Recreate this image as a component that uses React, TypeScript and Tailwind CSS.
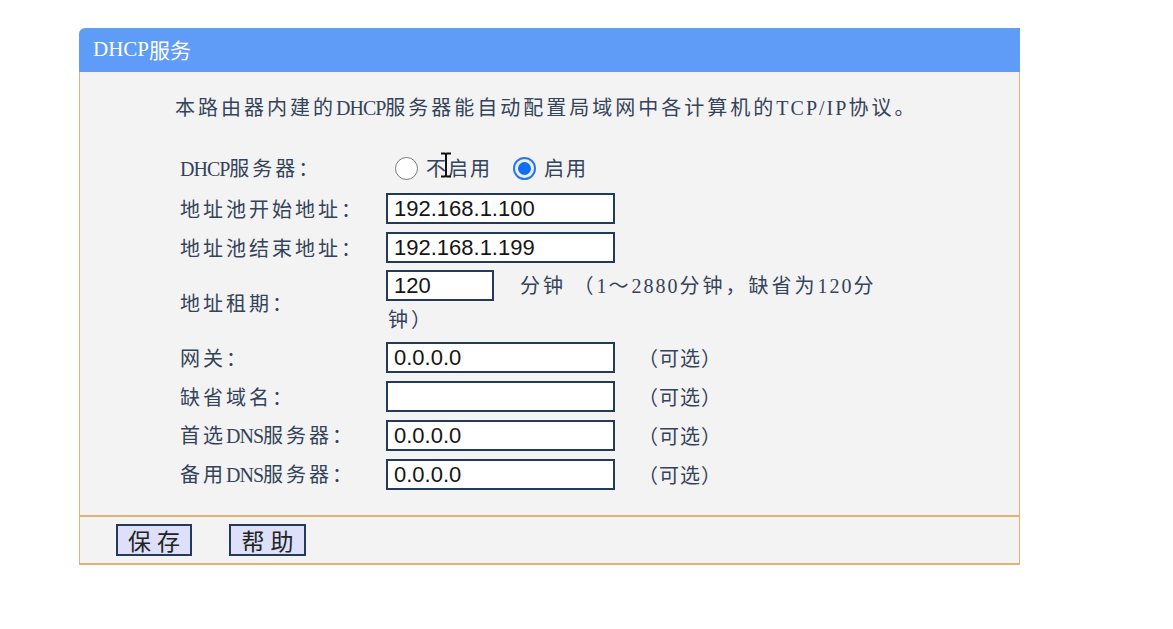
import type { ReactNode } from "react";

const cjk = { fontFamily: '"Noto Sans CJK SC", "Liberation Sans", sans-serif' };
const serif = '"Liberation Serif", "Noto Sans CJK SC", serif';

function L({ children, t = 2 }: { children: ReactNode; t?: number }) {
  return <span style={{ fontFamily: serif, letterSpacing: `${t}px` }}>{children}</span>;
}

function Row({ label, h, children }: { label: ReactNode; h: string; children: ReactNode }) {
  return (
    <div className={`flex items-center ${h}`}>
      <div className="w-[206px] shrink-0 text-[20px] tracking-[3px] text-[#34435a]" style={cjk}>
        {label}
      </div>
      <div className="flex-1">{children}</div>
    </div>
  );
}

function Field({ value, w = "w-[229px]" }: { value: string; w?: string }) {
  return (
    <div
      className={`${w} h-[31px] border-2 border-[#243a5a] bg-white pl-[6px] flex items-center text-[22px] tracking-normal text-[#151515]`}
      style={{ fontFamily: '"Liberation Sans", Arial, sans-serif' }}
    >
      {value}
    </div>
  );
}

function Optional() {
  return (
    <span className="ml-[23px] text-[20px] tracking-[1px] text-[#34435a]" style={cjk}>
      （可选）
    </span>
  );
}

function Radio({ checked }: { checked?: boolean }) {
  return checked ? (
    <span className="block w-[23px] h-[23px] rounded-full border-2 border-[#2a78e8] bg-[#e8f0fc] flex items-center justify-center">
      <span className="block w-[13px] h-[13px] rounded-full bg-[#0f6ff0]" />
    </span>
  ) : (
    <span className="block w-[23px] h-[23px] rounded-full border border-[#7a7a7a] bg-white" />
  );
}

export default function App() {
  return (
    <div className="min-h-screen bg-white pt-[28px]">
      <div className="ml-[79px] w-[941px]">
        <div
          className="h-[44px] bg-[#5e9cf8] rounded-tl-[6px] pl-[14px] flex items-center text-[21px] text-white"
          style={cjk}
        >
          <L t={0}>DHCP</L>服务
        </div>
        <div className="bg-[#f3f3f3] border-x border-[#e0b374] pt-[21px] pb-[21px]">
          <p className="pl-[95px] h-[28px] leading-[28px] text-[20px] tracking-[3px] text-[#34435a]" style={cjk}>
            本路由器内建的<L t={-1}>DHCP</L>服务器能自动配置局域网中各计算机的<L t={2}>TCP/IP</L>协议。
          </p>
          <div className="pl-[100px] mt-[26px]">
            <Row label={<><L t={-1}>DHCP</L>服务器：</>} h="h-[42px]">
              <div className="flex items-center text-[20px] tracking-[2px] text-[#34435a]" style={cjk}>
                <span className="ml-[9px] mr-[8px]">
                  <Radio />
                </span>
                <span className="relative">
                  不启用
                  <svg className="absolute left-[12px] top-[-1px]" width="16" height="26" viewBox="0 0 16 26">
                    <path d="M3 1.5h4l1 1 1-1h4M8 2.5v21M3 24.5h4l1-1 1 1h4" fill="none" stroke="#111" strokeWidth="2" />
                  </svg>
                </span>
                <span className="ml-[21px] mr-[8px]">
                  <Radio checked />
                </span>
                启用
              </div>
            </Row>
            <Row label="地址池开始地址：" h="h-[39px]">
              <Field value="192.168.1.100" />
            </Row>
            <Row label="地址池结束地址：" h="h-[39px]">
              <Field value="192.168.1.199" />
            </Row>
            <Row label="地址租期：" h="h-[71px]">
              <div className="text-[20px] tracking-[3px] text-[#34435a]" style={cjk}>
                <div className="flex items-center mt-[2px]">
                  <Field value="120" w="w-[108px]" />
                  <span className="ml-[26px]">
                    分钟 （<L>1</L>～<L>2880</L>分钟，缺省为<L>120</L>分
                  </span>
                </div>
                <div className="h-[36px] leading-[36px] pl-[2px]">钟）</div>
              </div>
            </Row>
            <Row label="网关：" h="h-[39px]">
              <div className="flex items-center">
                <Field value="0.0.0.0" />
                <Optional />
              </div>
            </Row>
            <Row label="缺省域名：" h="h-[39px]">
              <div className="flex items-center">
                <Field value="" />
                <Optional />
              </div>
            </Row>
            <Row label={<>首选<L t={-1}>DNS</L>服务器：</>} h="h-[39px]">
              <div className="flex items-center">
                <Field value="0.0.0.0" />
                <Optional />
              </div>
            </Row>
            <Row label={<>备用<L t={-1}>DNS</L>服务器：</>} h="h-[39px]">
              <div className="flex items-center">
                <Field value="0.0.0.0" />
                <Optional />
              </div>
            </Row>
          </div>
        </div>
        <div className="h-[50px] bg-[#f3f3f3] border-t-2 border-b-2 border-x border-[#e0b374] pl-[36px] flex items-center gap-[37px]">
          <button
            className="w-[76px] h-[32px] border-2 border-[#243a5a] bg-[#dde0f8] text-[23px] tracking-[6px] pl-[6px] text-[#222] leading-none"
            style={cjk}
          >
            保存
          </button>
          <button
            className="w-[77px] h-[32px] border-2 border-[#243a5a] bg-[#dde0f8] text-[23px] tracking-[6px] pl-[6px] text-[#222] leading-none"
            style={cjk}
          >
            帮助
          </button>
        </div>
      </div>
    </div>
  );
}
